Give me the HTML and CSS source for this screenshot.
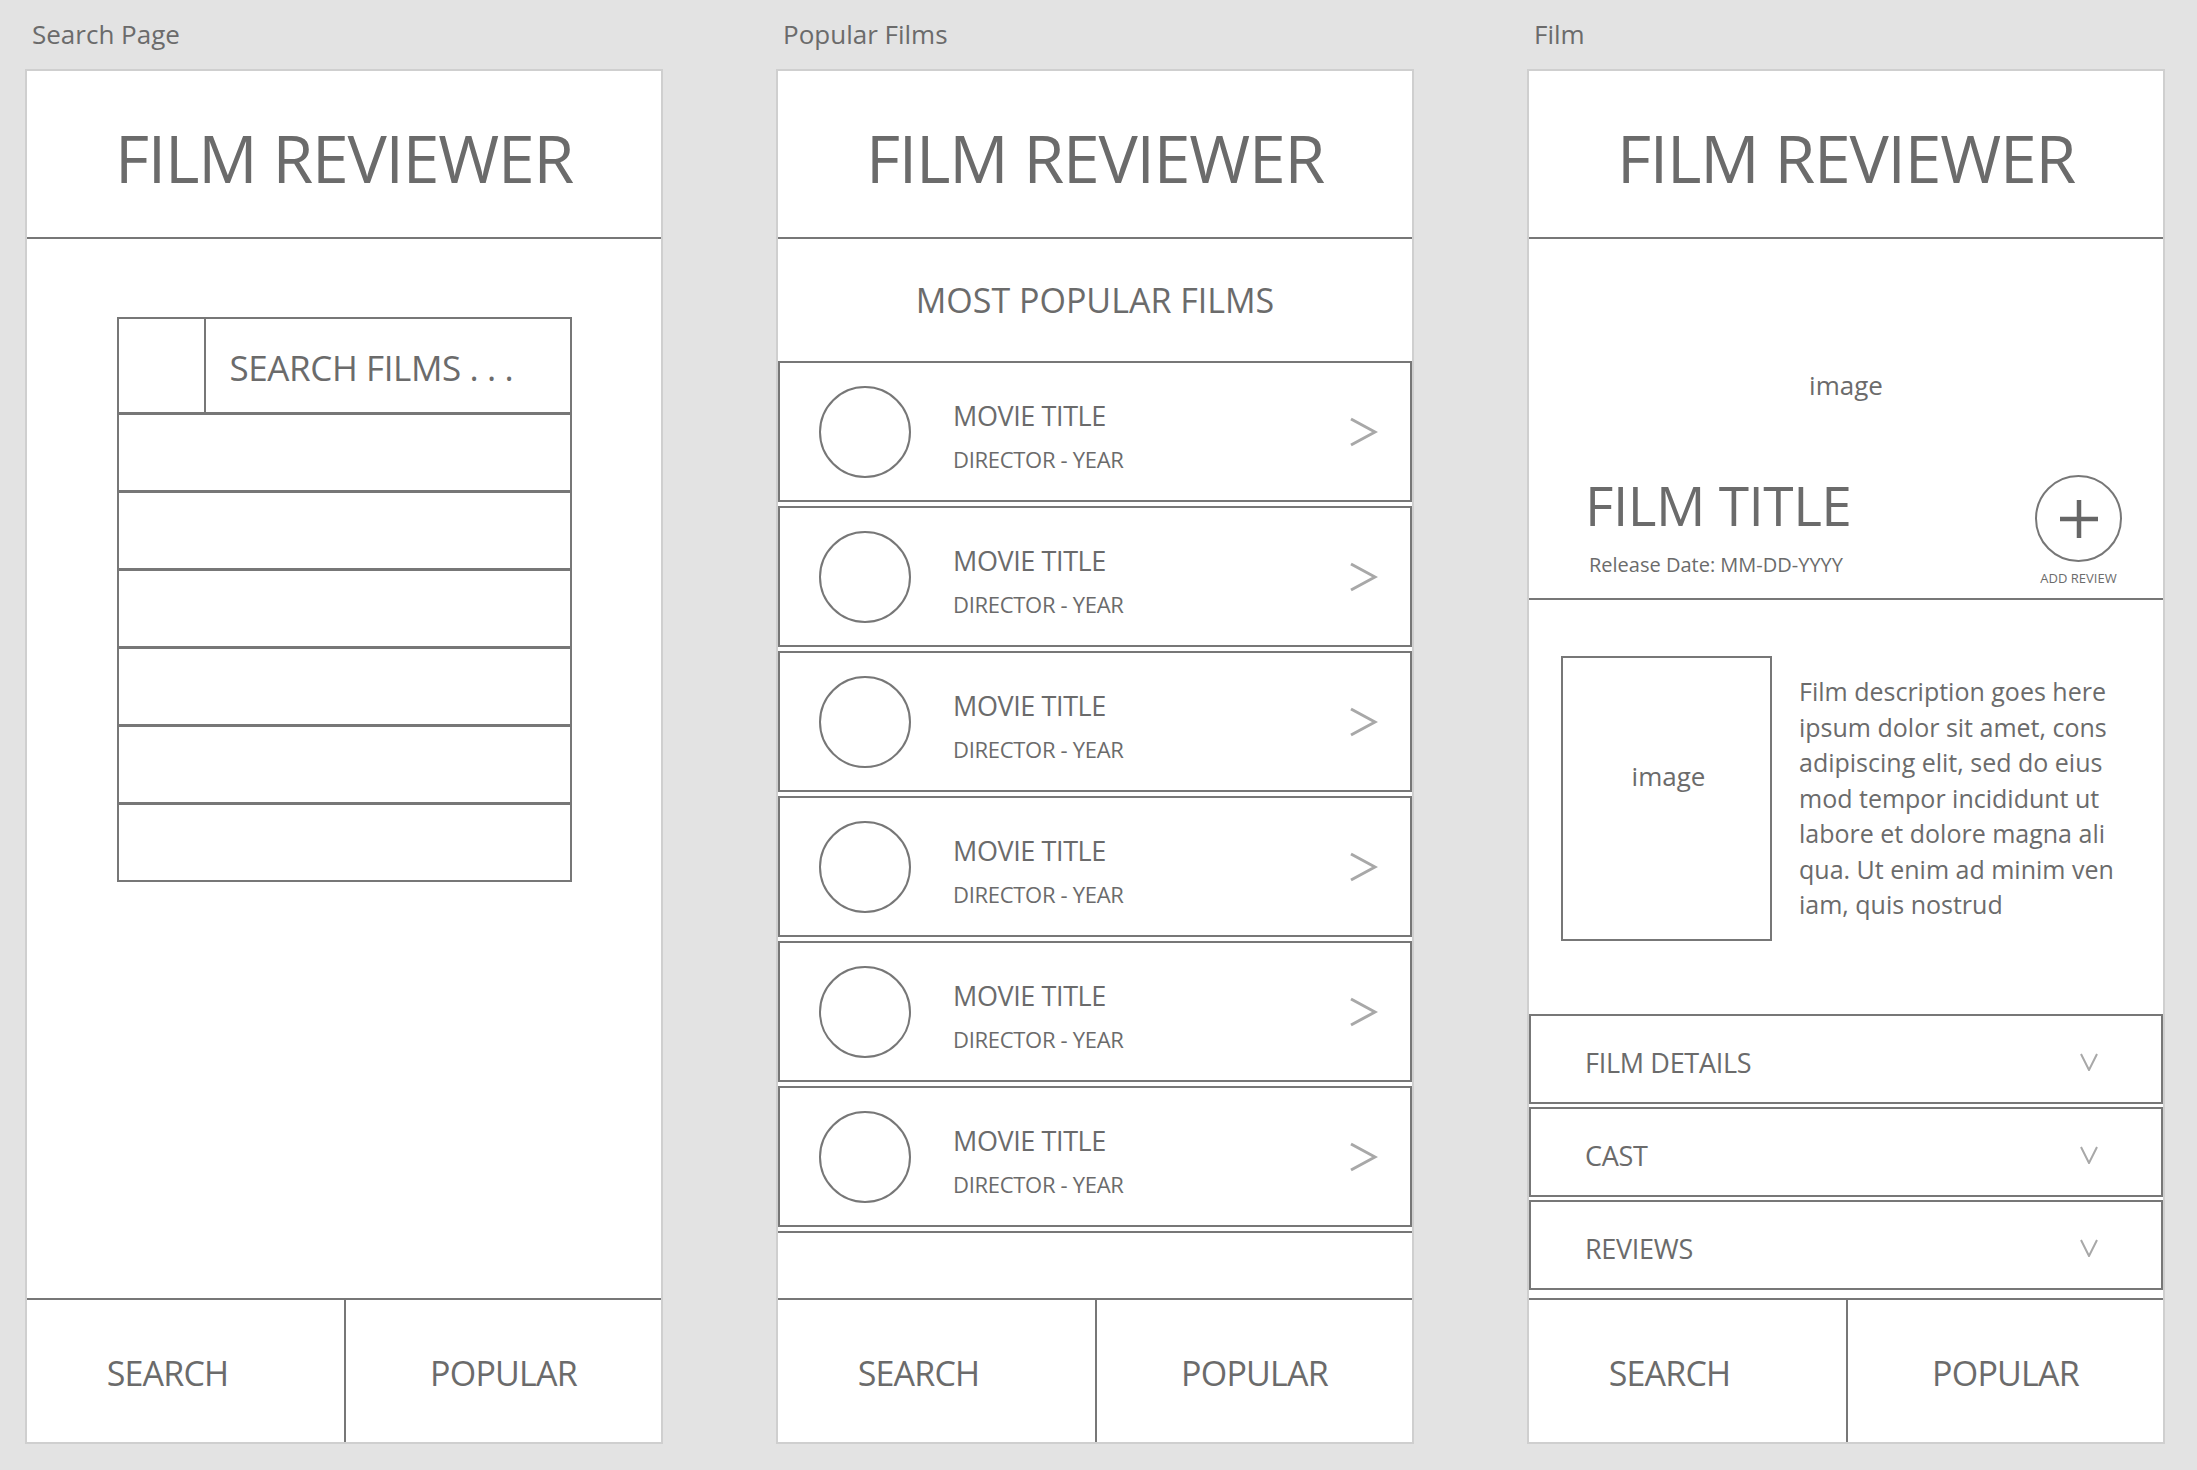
FILE: index.html
```html
<!DOCTYPE html>
<html lang="en">
<head>
    <meta charset="UTF-8">
    <meta name="viewport" content="width=device-width, initial-scale=1.0">
    <title>Film Reviewer - Wireframes</title>
    <link rel="stylesheet" href="styles.css">
</head>
<body>
<div class="board">

    <!-- Search page -->
    <section class="screen">
        <div class="screen-label">Search Page</div>
        <div class="phone">
            <header class="app-header"><h1>FILM REVIEWER</h1></header>
            <main class="phone-body search-body">
                <div class="search-box">
                    <div class="search-row">
                        <div class="search-icon"></div>
                        <div class="search-input">SEARCH FILMS . . .</div>
                    </div>
                    <div class="result-row"></div>
                    <div class="result-row"></div>
                    <div class="result-row"></div>
                    <div class="result-row"></div>
                    <div class="result-row"></div>
                    <div class="result-row"></div>
                </div>
            </main>
            <nav class="tab-bar">
                <div class="tab tab-search">SEARCH</div>
                <div class="tab tab-popular">POPULAR</div>
            </nav>
        </div>
    </section>

    <!-- Popular films -->
    <section class="screen">
        <div class="screen-label">Popular Films</div>
        <div class="phone">
            <header class="app-header"><h1>FILM REVIEWER</h1></header>
            <main class="phone-body popular-body">
                <h2 class="section-title">MOST POPULAR FILMS</h2>
                <ul class="movie-list">
                    <li class="movie">
                        <div class="thumb"></div>
                        <div class="movie-text">
                            <div class="movie-title">MOVIE TITLE</div>
                            <div class="movie-meta">DIRECTOR - YEAR</div>
                        </div>
                        <svg class="chevron-right" width="30" height="32" viewBox="0 0 30 32"><polyline points="3,3 27,16 3,29" /></svg>
                    </li>
                    <li class="movie">
                        <div class="thumb"></div>
                        <div class="movie-text">
                            <div class="movie-title">MOVIE TITLE</div>
                            <div class="movie-meta">DIRECTOR - YEAR</div>
                        </div>
                        <svg class="chevron-right" width="30" height="32" viewBox="0 0 30 32"><polyline points="3,3 27,16 3,29" /></svg>
                    </li>
                    <li class="movie">
                        <div class="thumb"></div>
                        <div class="movie-text">
                            <div class="movie-title">MOVIE TITLE</div>
                            <div class="movie-meta">DIRECTOR - YEAR</div>
                        </div>
                        <svg class="chevron-right" width="30" height="32" viewBox="0 0 30 32"><polyline points="3,3 27,16 3,29" /></svg>
                    </li>
                    <li class="movie">
                        <div class="thumb"></div>
                        <div class="movie-text">
                            <div class="movie-title">MOVIE TITLE</div>
                            <div class="movie-meta">DIRECTOR - YEAR</div>
                        </div>
                        <svg class="chevron-right" width="30" height="32" viewBox="0 0 30 32"><polyline points="3,3 27,16 3,29" /></svg>
                    </li>
                    <li class="movie">
                        <div class="thumb"></div>
                        <div class="movie-text">
                            <div class="movie-title">MOVIE TITLE</div>
                            <div class="movie-meta">DIRECTOR - YEAR</div>
                        </div>
                        <svg class="chevron-right" width="30" height="32" viewBox="0 0 30 32"><polyline points="3,3 27,16 3,29" /></svg>
                    </li>
                    <li class="movie">
                        <div class="thumb"></div>
                        <div class="movie-text">
                            <div class="movie-title">MOVIE TITLE</div>
                            <div class="movie-meta">DIRECTOR - YEAR</div>
                        </div>
                        <svg class="chevron-right" width="30" height="32" viewBox="0 0 30 32"><polyline points="3,3 27,16 3,29" /></svg>
                    </li>
                    <li class="list-end"></li>
                </ul>
            </main>
            <nav class="tab-bar">
                <div class="tab tab-search">SEARCH</div>
                <div class="tab tab-popular">POPULAR</div>
            </nav>
        </div>
    </section>

    <!-- Film detail -->
    <section class="screen">
        <div class="screen-label">Film</div>
        <div class="phone">
            <header class="app-header"><h1>FILM REVIEWER</h1></header>
            <main class="phone-body film-body">
                <div class="hero">
                    <div class="hero-image">image</div>
                    <div class="title-row">
                        <div class="title-block">
                            <h2 class="film-title">FILM TITLE</h2>
                            <div class="release">Release Date: MM-DD-YYYY</div>
                        </div>
                        <div class="add-review">
                            <div class="add-btn">
                                <svg width="44" height="44" viewBox="0 0 44 44"><path d="M22 3 V41 M3 22 H41" /></svg>
                            </div>
                            <div class="add-label">ADD REVIEW</div>
                        </div>
                    </div>
                </div>
                <div class="description">
                    <div class="poster">image</div>
                    <p class="desc-text">Film description goes here<br>ipsum dolor sit amet, cons<br>adipiscing elit, sed do eius<br>mod tempor incididunt ut<br>labore et dolore magna ali<br>qua. Ut enim ad minim ven<br>iam, quis nostrud</p>
                </div>
                <div class="accordion">
                    <div class="acc-item"><span>FILM DETAILS</span><svg class="chevron-down" width="20" height="18" viewBox="0 0 20 18"><polyline points="2,1 10,17 18,1" /></svg></div>
                    <div class="acc-item"><span>CAST</span><svg class="chevron-down" width="20" height="18" viewBox="0 0 20 18"><polyline points="2,1 10,17 18,1" /></svg></div>
                    <div class="acc-item"><span>REVIEWS</span><svg class="chevron-down" width="20" height="18" viewBox="0 0 20 18"><polyline points="2,1 10,17 18,1" /></svg></div>
                </div>
            </main>
            <nav class="tab-bar">
                <div class="tab tab-search">SEARCH</div>
                <div class="tab tab-popular">POPULAR</div>
            </nav>
        </div>
    </section>

</div>
</body>
</html>
```

FILE: styles.css
```css
body {
    margin: 0;
    background-color: #e3e3e3;
    font-family: 'Open Sans', 'Noto Sans', sans-serif;
    color: #6b6b6b;
}

.board {
    display: flex;
    gap: 113px;
    padding-left: 25px;
}

.screen-label {
    height: 69px;
    line-height: 69px;
    font-size: 26px;
    padding-left: 7px;
    color: #6b6b6b;
}

.phone {
    width: 638px;
    height: 1375px;
    box-sizing: border-box;
    border: 2px solid #cfcfcf;
    background-color: #fff;
    display: flex;
    flex-direction: column;
}

/* header */
.app-header {
    height: 168px;
    box-sizing: border-box;
    padding-top: 6px;
    border-bottom: 2px solid #777;
    display: flex;
    align-items: center;
    justify-content: center;
}
.app-header h1 {
    margin: 0;
    font-size: 66px;
    font-weight: 400;
    letter-spacing: -1.2px;
    line-height: 91px;
}

.phone-body {
    flex: 1;
    min-height: 0;
    display: flex;
    flex-direction: column;
}

/* bottom tabs */
.tab-bar {
    height: 144px;
    box-sizing: border-box;
    border-top: 2px solid #777;
    display: flex;
}
.tab {
    flex: 0 0 50%;
    box-sizing: border-box;
    display: flex;
    align-items: center;
    justify-content: center;
    padding-top: 4px;
    font-size: 34px;
    letter-spacing: -0.8px;
}
.tab-search {
    padding-right: 36px;
}
.tab-popular {
    border-left: 2px solid #777;
}

/* search page */
.search-box {
    width: 455px;
    box-sizing: border-box;
    margin: 78px auto 0;
    border: 2px solid #777;
}
.search-row {
    height: 93px;
    display: flex;
}
.search-icon {
    width: 85px;
    border-right: 2px solid #777;
}
.search-input {
    flex: 1;
    display: flex;
    align-items: center;
    padding: 4px 0 0 24px;
    font-size: 35px;
    letter-spacing: -0.4px;
}
.result-row {
    height: 75px;
    border-top: 3px solid #777;
}

/* popular films */
.section-title {
    margin: 0;
    height: 122px;
    display: flex;
    align-items: center;
    justify-content: center;
    font-size: 34px;
    font-weight: 400;
}
.movie-list {
    list-style: none;
    margin: 0;
    padding: 0;
    flex: 1;
    overflow: hidden;
}
.movie {
    height: 141px;
    box-sizing: border-box;
    border: 2px solid #777;
    margin-bottom: 4px;
    display: flex;
    align-items: center;
    padding: 0 32px 0 39px;
}
.list-end {
    border-top: 2px solid #777;
}
.thumb {
    width: 92px;
    height: 92px;
    box-sizing: border-box;
    border: 2px solid #777;
    border-radius: 50%;
    flex-shrink: 0;
}
.movie-text {
    flex: 1;
    margin-left: 42px;
    padding-top: 12px;
}
.movie-title {
    font-size: 27px;
    letter-spacing: -0.4px;
    line-height: 36px;
}
.movie-meta {
    font-size: 22px;
    letter-spacing: -0.3px;
    line-height: 36px;
    margin-top: 7px;
}
.chevron-right polyline,
.chevron-down polyline {
    fill: none;
    stroke: #a8a8a8;
    stroke-width: 3;
}
.chevron-down polyline {
    stroke-width: 2;
}

/* film page */
.hero {
    height: 361px;
    box-sizing: border-box;
    border-bottom: 2px solid #777;
    padding-top: 128px;
}
.hero-image {
    text-align: center;
    font-size: 26px;
    line-height: 36px;
}
.title-row {
    margin-top: 72px;
    display: flex;
    justify-content: space-between;
    padding: 0 41px 0 56px;
}
.film-title {
    margin: 0;
    font-size: 55px;
    font-weight: 400;
    letter-spacing: -0.5px;
    line-height: 60px;
}
.release {
    margin-top: 16px;
    padding-left: 4px;
    font-size: 20px;
    line-height: 28px;
}
.add-review {
    display: flex;
    flex-direction: column;
    align-items: center;
}
.add-btn {
    width: 87px;
    height: 87px;
    box-sizing: border-box;
    border: 2px solid #777;
    border-radius: 50%;
    display: flex;
    align-items: center;
    justify-content: center;
}
.add-btn path {
    stroke: #666;
    stroke-width: 4.5;
}
.add-label {
    margin-top: 7px;
    font-size: 13px;
    line-height: 18px;
}

.description {
    display: flex;
    padding: 56px 0 0 32px;
}
.poster {
    width: 211px;
    height: 285px;
    box-sizing: border-box;
    border: 2px solid #777;
    flex-shrink: 0;
    text-align: center;
    padding-top: 100px;
    padding-left: 4px;
    font-size: 26px;
    line-height: 36px;
}
.desc-text {
    margin: 18px 0 0 27px;
    font-size: 25px;
    line-height: 35.5px;
}

.accordion {
    margin-top: auto;
    margin-bottom: 8px;
    display: flex;
    flex-direction: column;
    gap: 3px;
}
.acc-item {
    height: 90px;
    box-sizing: border-box;
    border: 2px solid #777;
    display: flex;
    align-items: center;
    justify-content: space-between;
    padding: 6px 62px 0 54px;
    font-size: 27px;
    letter-spacing: -0.3px;
}
```
